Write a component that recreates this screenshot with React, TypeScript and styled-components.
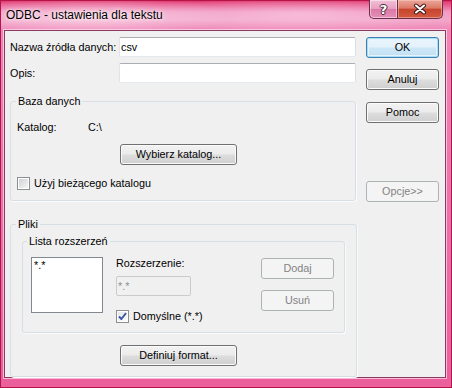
import React from "react";
import styled, { createGlobalStyle, css } from "styled-components";

const GlobalStyle = createGlobalStyle`
  html, body { margin: 0; padding: 0; background: #ec6aa3; }
  body { font-family: "Liberation Sans", Arial, sans-serif; font-size: 10.8px; color: #000; }
  * { box-sizing: border-box; }
`;

const Window = styled.div`
  width: 452px;
  height: 388px;
  display: flex;
  flex-direction: column;
  overflow: hidden;
  background:
    radial-gradient(ellipse 140px 22px at 90px 16px, rgba(255, 235, 245, 0.55), rgba(255, 235, 245, 0) 100%),
    radial-gradient(ellipse 160px 20px at 300px 14px, rgba(255, 220, 238, 0.45), rgba(255, 220, 238, 0) 100%),
    linear-gradient(180deg, #d92255 0px, #e44a82 3px, #f09ac2 12px, #f2a6c9 20px, #ee86b6 30px, #ec6ea8 60%, #ea5f9c 100%);
  box-shadow: inset 0 0 0 1px #b51448;
`;

const TitleBar = styled.div`
  height: 30px;
  flex: none;
  display: flex;
  align-items: flex-start;
  padding-left: 6px;
`;

const Title = styled.div`
  margin-top: 8px;
  font-size: 12px;
  line-height: 14px;
  color: #000;
  text-shadow: 0 0 6px rgba(255, 255, 255, 0.9), 0 0 3px rgba(255, 255, 255, 0.8);
`;

const Caption = styled.div`
  margin-left: auto;
  margin-right: 9px;
  display: flex;
  height: 19px;
`;

const CapBtn = styled.div<{ $kind: "help" | "close" }>`
  height: 19px;
  display: flex;
  align-items: center;
  justify-content: center;
  border: 1px solid #6b2f49;
  border-top: none;
  color: #fff;
  ${(p) =>
    p.$kind === "help"
      ? css`
          width: 29px;
          border-radius: 0 0 0 5px;
          background: linear-gradient(180deg, #f1c2d8 0%, #e8a0c1 48%, #dc7aa7 52%, #e48fb7 100%);
          box-shadow: inset 0 0 0 1px rgba(255, 255, 255, 0.45);
        `
      : css`
          width: 45px;
          border-left: none;
          border-radius: 0 0 5px 0;
          background: linear-gradient(180deg, #eba79b 0%, #dc7966 45%, #c8452e 52%, #d25a40 100%);
          box-shadow: inset 0 0 0 1px rgba(255, 210, 200, 0.45);
        `}
`;

const HelpGlyph = styled.span`
  font-family: "DejaVu Sans", sans-serif;
  font-weight: bold;
  font-size: 13px;
  line-height: 13px;
  color: #fff;
  text-shadow: 1px 0 0 #4a2a3a, -1px 0 0 #4a2a3a, 0 1px 0 #4a2a3a, 0 -1px 0 #4a2a3a;
`;

const ClientWrap = styled.div`
  flex: 1;
  display: flex;
  padding: 0 6px 10px 4px;
`;

const Client = styled.div`
  flex: 1;
  display: flex;
  padding: 6px 6px 0 5px;
  background: #f0f0f0;
  border: 1px solid #8a3a60;
  box-shadow: 0 0 0 1px rgba(255, 225, 240, 0.7);
`;

const Main = styled.div`
  width: 347px;
  display: flex;
  flex-direction: column;
`;

const Side = styled.div`
  margin-left: 9px;
  width: 73px;
  display: flex;
  flex-direction: column;
`;

const FormRow = styled.div<{ $mt?: number }>`
  display: flex;
  align-items: center;
  height: 20px;
  margin-top: ${(p) => p.$mt ?? 0}px;
`;

const Label = styled.span<{ $w?: number }>`
  display: inline-block;
  width: ${(p) => (p.$w ? `${p.$w}px` : "auto")};
  line-height: 13px;
  white-space: nowrap;
`;

const TextBox = styled.input<{ $w: number }>`
  width: ${(p) => p.$w}px;
  height: 20px;
  padding: 0 1px;
  font: inherit;
  font-size: 10.8px;
  color: #000;
  background: #fff;
  border: 1px solid #e3e9ef;
  border-top-color: #abadb3;
  border-left-color: #e2e3ea;
  border-right-color: #dbdfe6;
  border-radius: 2px;
  outline: none;
  &:disabled {
    background: #f0f0f0;
    border-color: #c9cbcf;
    color: #8d8d8d;
  }
`;

const Group = styled.fieldset<{ $w: number; $mt: number; $ml?: number }>`
  margin: ${(p) => p.$mt}px 0 0 ${(p) => p.$ml ?? 0}px;
  width: ${(p) => p.$w}px;
  min-width: 0;
  padding: 0;
  border: 1px solid #d5dfe5;
  border-radius: 3px;
  box-shadow: 1px 1px 0 #fbfbfb;
`;

const Legend = styled.legend<{ $ml: number }>`
  margin-left: ${(p) => p.$ml}px;
  padding: 0 2px;
  line-height: 14px;
  font-size: 10.8px;
`;

const BazaBody = styled.div`
  padding: 13px 0 10px 6px;
  display: flex;
  flex-direction: column;
  align-items: flex-start;
`;

const KatalogRow = styled.div`
  display: flex;
  height: 13px;
  align-items: center;
`;

const CheckRow = styled.label<{ $mt?: number }>`
  display: flex;
  align-items: center;
  gap: 4px;
  height: 13px;
  margin-top: ${(p) => p.$mt ?? 0}px;
  line-height: 13px;
`;

const CheckBox = styled.span`
  width: 13px;
  height: 13px;
  flex: none;
  border: 1px solid #8e8f8f;
  background: #fff;
  padding: 1px;
  display: flex;
`;

const CheckInner = styled.span`
  flex: 1;
  display: flex;
  align-items: center;
  justify-content: center;
  background: linear-gradient(135deg, #cfd2d6 0%, #e6e7e9 60%, #f6f6f6 100%);
`;

const CheckInnerOn = styled(CheckInner)`
  background: linear-gradient(135deg, #e4e6ea 0%, #f4f4f5 60%, #fdfdfd 100%);
`;

const PlikiBody = styled.div`
  padding: 3px 0 10px 0;
  display: flex;
  flex-direction: column;
  align-items: flex-start;
`;

const ListaBody = styled.div`
  display: flex;
  align-items: flex-start;
  padding: 9px 0 9px 8px;
`;

const ListBox = styled.div`
  width: 72px;
  height: 56px;
  background: #fff;
  border: 1px solid #828790;
  padding: 1px 2px;
  line-height: 13px;
`;

const ExtCol = styled.div`
  margin-left: 13px;
  width: 145px;
  display: flex;
  flex-direction: column;
  align-items: flex-start;
`;

const ExtLabel = styled.div`
  line-height: 13px;
  height: 13px;
  margin-bottom: 6px;
`;

const BtnCol = styled.div`
  display: flex;
  flex-direction: column;
  padding-top: 1px;
`;

type BtnVariant = "normal" | "default" | "disabled";

const Button = styled.button<{ $w?: number; $mt?: number; $ml?: number; $variant?: BtnVariant }>`
  width: ${(p) => p.$w ?? 73}px;
  height: 21px;
  margin: ${(p) => p.$mt ?? 0}px 0 0 ${(p) => p.$ml ?? 0}px;
  padding: 0;
  font: inherit;
  font-size: 10.8px;
  line-height: 13px;
  color: #000;
  border: 1px solid #707070;
  border-radius: 3px;
  background: linear-gradient(180deg, #f2f2f2 0%, #ebebeb 48%, #dddddd 52%, #cfcfcf 100%);
  box-shadow: inset 0 0 0 1px #fbfbfb;
  text-align: center;
  ${(p) =>
    p.$variant === "default" &&
    css`
      border-color: #3c7fb1;
      box-shadow: inset 0 0 0 1px #a9ddf6, inset 0 0 0 2px #e4f3fb;
      background: linear-gradient(180deg, #eaf5fc 0%, #e3f1fa 48%, #cde7f7 52%, #c2e0f4 100%);
    `}
  ${(p) =>
    p.$variant === "disabled" &&
    css`
      border-color: #adb2b5;
      background: #f4f4f4;
      box-shadow: none;
      color: #838383;
    `}
`;

const Check = () => (
  <svg width="9" height="9" viewBox="0 0 9 9">
    <path d="M1 4.5 L3.4 7 L8 1.2" fill="none" stroke="#3b57a6" strokeWidth="1.9" strokeLinejoin="round" />
  </svg>
);

const CloseIcon = () => (
  <svg width="14" height="12" viewBox="0 0 14 12">
    <path d="M3 2.5 L11 9.5 M11 2.5 L3 9.5" stroke="#3d1a1a" strokeWidth="4" strokeLinecap="round" />
    <path d="M3 2.5 L11 9.5 M11 2.5 L3 9.5" stroke="#ffffff" strokeWidth="2" strokeLinecap="round" />
  </svg>
);

export default function App() {
  return (
    <>
      <GlobalStyle />
      <Window>
        <TitleBar>
          <Title>ODBC - ustawienia dla tekstu</Title>
          <Caption>
            <CapBtn $kind="help">
              <HelpGlyph>?</HelpGlyph>
            </CapBtn>
            <CapBtn $kind="close">
              <CloseIcon />
            </CapBtn>
          </Caption>
        </TitleBar>
        <ClientWrap>
          <Client>
            <Main>
              <FormRow>
                <Label $w={109}>Nazwa źródła danych:</Label>
                <TextBox $w={237} readOnly value="csv" />
              </FormRow>
              <FormRow $mt={6}>
                <Label $w={109}>Opis:</Label>
                <TextBox $w={237} readOnly value="" />
              </FormRow>

              <Group $w={346} $mt={11}>
                <Legend $ml={5}>Baza danych</Legend>
                <BazaBody>
                  <KatalogRow>
                    <Label $w={71}>Katalog:</Label>
                    <Label>C:\</Label>
                  </KatalogRow>
                  <Button $w={117} $mt={10} $ml={103}>
                    Wybierz katalog...
                  </Button>
                  <CheckRow $mt={12}>
                    <CheckBox>
                      <CheckInner />
                    </CheckBox>
                    Użyj bieżącego katalogu
                  </CheckRow>
                </BazaBody>
              </Group>

              <Group $w={347} $mt={16}>
                <Legend $ml={5}>Pliki</Legend>
                <PlikiBody>
                  <Group $w={323} $mt={0} $ml={11}>
                    <Legend $ml={4}>Lista rozszerzeń</Legend>
                    <ListaBody>
                      <ListBox>*.*</ListBox>
                      <ExtCol>
                        <ExtLabel>Rozszerzenie:</ExtLabel>
                        <TextBox $w={75} disabled value="*.*" readOnly />
                        <CheckRow $mt={14}>
                          <CheckBox>
                            <CheckInnerOn>
                              <Check />
                            </CheckInnerOn>
                          </CheckBox>
                          Domyślne (*.*)
                        </CheckRow>
                      </ExtCol>
                      <BtnCol>
                        <Button $variant="disabled">Dodaj</Button>
                        <Button $variant="disabled" $mt={11}>
                          Usuń
                        </Button>
                      </BtnCol>
                    </ListaBody>
                  </Group>
                  <Button $w={117} $mt={12} $ml={109}>
                    Definiuj format...
                  </Button>
                </PlikiBody>
              </Group>
            </Main>
            <Side>
              <Button $variant="default">OK</Button>
              <Button $mt={11}>Anuluj</Button>
              <Button $mt={12}>Pomoc</Button>
              <Button $mt={58} $variant="disabled">
                Opcje&gt;&gt;
              </Button>
            </Side>
          </Client>
        </ClientWrap>
      </Window>
    </>
  );
}
